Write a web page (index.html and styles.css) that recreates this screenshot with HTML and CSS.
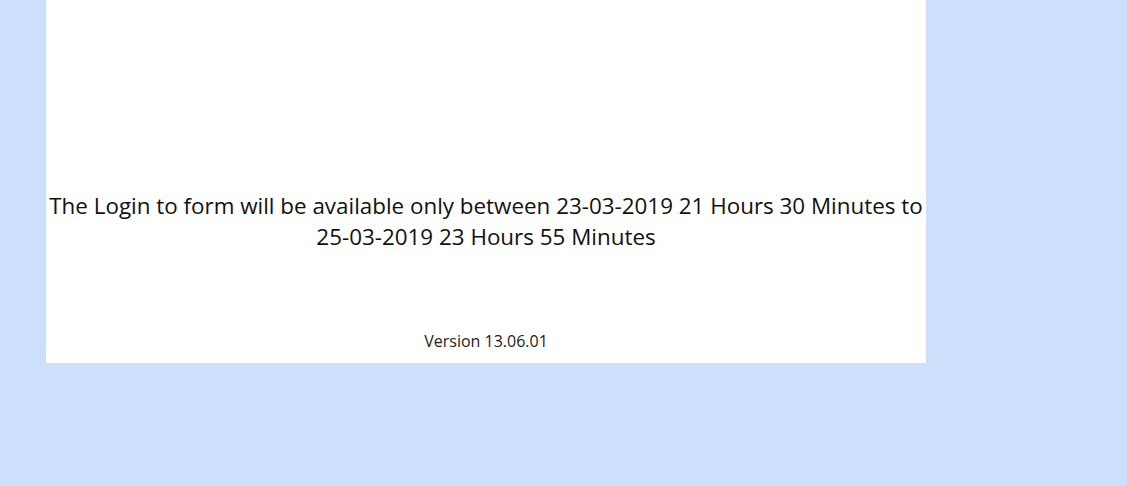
FILE: index.html
```html
<!DOCTYPE html>
<html>
<head>
<meta charset="utf-8">
<link rel="stylesheet" href="styles.css">
</head>
<body>
<div class="panel">
  <p class="notice">The Login to form will be available only between 23-03-2019 21 Hours 30 Minutes to 25-03-2019 23 Hours 55 Minutes</p>
  <p class="version">Version 13.06.01</p>
</div>
</body>
</html>
```
FILE: styles.css
```css
html, body {
  margin: 0;
  padding: 0;
  background: #cce0fc;
}
body {
  font-family: "Open Sans", "Liberation Sans", sans-serif;
  color: #111;
}
.panel {
  margin-left: 46px;
  width: 880px;
  height: 363px;
  box-sizing: border-box;
  background: #fff;
  padding-top: 190px;
  display: flex;
  flex-direction: column;
  align-items: center;
}
.notice {
  margin: 0;
  font-size: 22.4px;
  line-height: 31px;
  text-align: center;
}
.version {
  margin: 78px 0 0;
  font-size: 16px;
  line-height: 22px;
  color: #222;
  text-align: center;
}
```
